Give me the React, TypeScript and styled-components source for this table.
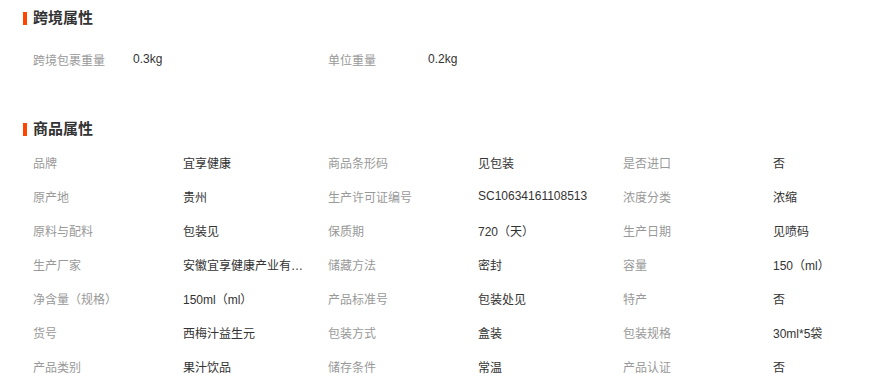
import React from "react";
import styled, { createGlobalStyle } from "styled-components";

const Global = createGlobalStyle`
  html, body { margin: 0; padding: 0; background: #fff; }
  body { font-family: "Liberation Sans", Arial, "Noto Sans CJK SC", sans-serif; }
`;

const Page = styled.div`
  padding: 8px 0 0 23px;
`;

const Section = styled.section<{ $gapTop?: number }>`
  margin-top: ${(p) => p.$gapTop ?? 0}px;
`;

const Title = styled.h3`
  display: flex;
  align-items: center;
  gap: 6px;
  height: 20px;
  margin: 0;
  font-size: 15px;
  font-weight: bold;
  color: #333;
  line-height: 20px;
  &::before {
    content: "";
    display: block;
    width: 4px;
    height: 13px;
    background: #ff4400;
  }
`;

const Grid = styled.div<{ $cols: string; $top: number }>`
  display: grid;
  grid-template-columns: ${(p) => p.$cols};
  grid-auto-rows: 34px;
  margin-top: ${(p) => p.$top}px;
  padding-left: 10px;
`;

const Cell = styled.div<{ $label?: boolean }>`
  display: flex;
  align-items: center;
  font-size: 12px;
  color: ${(p) => (p.$label ? "#999" : "#333")};
  padding-right: ${(p) => (p.$label ? 0 : 20)}px;
  min-width: 0;
  span {
    white-space: nowrap;
    overflow: hidden;
    text-overflow: ellipsis;
  }
`;

const cross: [string, string][] = [
  ["跨境包裹重量", "0.3kg"],
  ["单位重量", "0.2kg"],
];

const attrs: [string, string][] = [
  ["品牌", "宜享健康"],
  ["商品条形码", "见包装"],
  ["是否进口", "否"],
  ["原产地", "贵州"],
  ["生产许可证编号", "SC10634161108513"],
  ["浓度分类", "浓缩"],
  ["原料与配料", "包装见"],
  ["保质期", "720（天）"],
  ["生产日期", "见喷码"],
  ["生产厂家", "安徽宜享健康产业有限公司"],
  ["储藏方法", "密封"],
  ["容量", "150（ml）"],
  ["净含量（规格）", "150ml（ml）"],
  ["产品标准号", "包装处见"],
  ["特产", "否"],
  ["货号", "西梅汁益生元"],
  ["包装方式", "盒装"],
  ["包装规格", "30ml*5袋"],
  ["产品类别", "果汁饮品"],
  ["储存条件", "常温"],
  ["产品认证", "否"],
];

const renderPairs = (list: [string, string][]) =>
  list.map(([k, v]) => (
    <React.Fragment key={k}>
      <Cell $label>
        <span>{k}</span>
      </Cell>
      <Cell>
        <span>{v}</span>
      </Cell>
    </React.Fragment>
  ));

export default function App() {
  return (
    <Page>
      <Global />
      <Section>
        <Title>跨境属性</Title>
        <Grid $cols="100px 195px 100px 195px" $top={14}>
          {renderPairs(cross)}
        </Grid>
      </Section>
      <Section $gapTop={43}>
        <Title>商品属性</Title>
        <Grid $cols="150px 145px 150px 145px 150px 145px" $top={6}>
          {renderPairs(attrs)}
        </Grid>
      </Section>
    </Page>
  );
}
